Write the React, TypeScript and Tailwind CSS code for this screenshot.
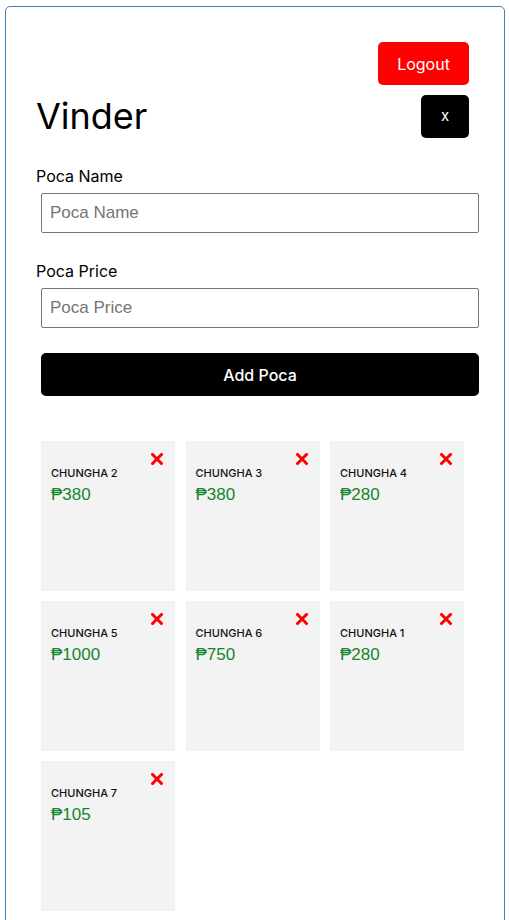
import React from "react";

type Poca = { name: string; price: number };

const pocas: Poca[] = [
  { name: "CHUNGHA 2", price: 380 },
  { name: "CHUNGHA 3", price: 380 },
  { name: "CHUNGHA 4", price: 280 },
  { name: "CHUNGHA 5", price: 1000 },
  { name: "CHUNGHA 6", price: 750 },
  { name: "CHUNGHA 1", price: 280 },
  { name: "CHUNGHA 7", price: 105 },
];

const uiFont = { fontFamily: "Inter, 'Noto Sans', sans-serif" };
const arial = { fontFamily: "'Liberation Sans', Arial, sans-serif" };

function RemoveIcon() {
  return (
    <svg width="12" height="12" viewBox="0 0 12 12" aria-hidden>
      <path d="M1.5 1.5 L10.5 10.5 M10.5 1.5 L1.5 10.5" stroke="#ff0000" strokeWidth="3" strokeLinecap="square" />
    </svg>
  );
}

function PocaCard({ poca }: { poca: Poca }) {
  return (
    <div className="relative h-[150px] w-[134px] bg-[#f3f3f3] px-[10px] pt-[24px]">
      <button className="absolute right-[12px] top-[12px] flex h-[12px] w-[12px] items-center justify-center">
        <RemoveIcon />
      </button>
      <div className="text-[11px] font-medium leading-[16px] text-[#111]">{poca.name}</div>
      <div className="mt-[4px] text-[17px] leading-[20px] text-[#14862c]" style={arial}>
        ₱{poca.price}
      </div>
    </div>
  );
}

export default function App() {
  return (
    <div className="min-h-[920px] bg-white pl-[5px] pt-[6px]" style={uiFont}>
      <div className="min-h-[950px] w-[500px] rounded-[5px] border border-[#3f7fbf] pl-[30px] pr-[20px] pt-[35px] pb-[20px]">
        <div className="flex justify-end pr-[15px]">
          <button className="h-[43px] w-[91px] rounded-[5px] bg-[#ff0000] text-[16px] text-white">Logout</button>
        </div>
        <div className="mt-[10px] flex items-center justify-between pr-[15px]">
          <h1 className="text-[36px] font-normal leading-[43px] text-black">Vinder</h1>
          <button className="h-[43px] w-[48px] rounded-[5px] bg-black text-[15px] text-white">x</button>
        </div>

        <form className="mt-[26px] flex flex-col">
          <label className="text-[16px] leading-[24px] text-black">Poca Name</label>
          <input
            className="ml-[5px] mt-[5px] h-[40px] w-[438px] rounded-[2px] border border-[#767676] pl-[8px] text-[17px] placeholder:text-[#757575]"
            style={arial}
            placeholder="Poca Name"
          />
          <label className="mt-[26px] text-[16px] leading-[24px] text-black">Poca Price</label>
          <input
            className="ml-[5px] mt-[5px] h-[40px] w-[438px] rounded-[2px] border border-[#767676] pl-[8px] text-[17px] placeholder:text-[#757575]"
            style={arial}
            placeholder="Poca Price"
          />
          <button
            type="button"
            className="ml-[5px] mt-[25px] h-[43px] w-[438px] rounded-[5px] bg-black text-[16px] font-medium text-white"
          >
            Add Poca
          </button>
        </form>

        <div className="ml-[5px] mt-[45px] flex w-[430px] flex-wrap gap-[10px] gap-x-[10.5px]">
          {pocas.map((p) => (
            <PocaCard key={p.name} poca={p} />
          ))}
        </div>
      </div>
    </div>
  );
}
